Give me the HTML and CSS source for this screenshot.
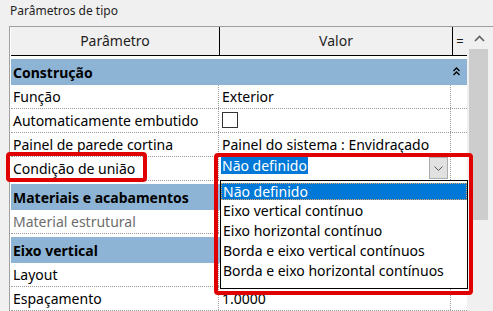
FILE: index.html
```html
<!DOCTYPE html>
<html lang="pt">
<head>
    <meta charset="UTF-8">
    <title>Parâmetros de tipo</title>
    <link rel="stylesheet" href="styles.css">
</head>
<body>
    <div class="title">Parâmetros de tipo</div>

    <div class="panel">
        <div class="grid">
            <div class="head">
                <div class="c1">Parâmetro</div>
                <div class="c2">Valor</div>
                <div class="c3">=</div>
            </div>

            <div class="group">
                <span>Construção</span>
                <svg class="collapse" width="7" height="9" viewBox="0 0 7 9">
                    <path d="M0.5 4 L3.5 1 L6.5 4 M0.5 8 L3.5 5 L6.5 8" fill="none" stroke="#000" stroke-width="1.4"/>
                </svg>
            </div>
            <div class="row">
                <div class="c1">Função</div>
                <div class="c2">Exterior</div>
                <div class="c3"></div>
            </div>
            <div class="row">
                <div class="c1">Automaticamente embutido</div>
                <div class="c2"><span class="check"></span></div>
                <div class="c3"></div>
            </div>
            <div class="row">
                <div class="c1">Painel de parede cortina</div>
                <div class="c2">Painel do sistema : Envidraçado</div>
                <div class="c3"></div>
            </div>
            <div class="row">
                <div class="c1">Condição de união</div>
                <div class="c2">
                    <div class="combo">
                        <span class="combo-text">Não definido</span>
                        <span class="combo-btn">
                            <svg width="9" height="5" viewBox="0 0 9 5">
                                <path d="M0.5 0.5 L4.5 4.5 L8.5 0.5" fill="none" stroke="#555" stroke-width="1"/>
                            </svg>
                        </span>
                    </div>
                </div>
                <div class="c3"></div>
            </div>

            <div class="group">
                <span>Materiais e acabamentos</span>
            </div>
            <div class="row">
                <div class="c1 muted">Material estrutural</div>
                <div class="c2"></div>
                <div class="c3"></div>
            </div>

            <div class="group">
                <span>Eixo vertical</span>
            </div>
            <div class="row">
                <div class="c1">Layout</div>
                <div class="c2"></div>
                <div class="c3"></div>
            </div>
            <div class="row">
                <div class="c1">Espaçamento</div>
                <div class="c2">1.0000</div>
                <div class="c3"></div>
            </div>
        </div>

        <div class="scroll">
            <div class="scroll-up">
                <svg width="11" height="7" viewBox="0 0 11 7">
                    <path d="M1 6 L5.5 1.5 L10 6" fill="none" stroke="#606060" stroke-width="1.6"/>
                </svg>
            </div>
            <div class="thumb"></div>
        </div>
    </div>

    <!-- lista aberta do combo -->
    <div class="dropdown">
        <div class="item selected">Não definido</div>
        <div class="item">Eixo vertical contínuo</div>
        <div class="item">Eixo horizontal contínuo</div>
        <div class="item">Borda e eixo vertical contínuos</div>
        <div class="item">Borda e eixo horizontal contínuos</div>
    </div>

    <!-- marcações vermelhas -->
    <div class="mark mark-label"></div>
    <div class="mark mark-list"></div>
</body>
</html>
```

FILE: styles.css
```css
body {
    margin: 0;
    height: 311px;
    overflow: hidden;
    position: relative;
    background-color: #f0f0f0;
    font-family: "Noto Sans", "Open Sans", sans-serif;
    font-size: 14px;
    color: #000;
}
.title {
    height: 26px;
    padding-left: 10px;
    font-size: 12px;
    line-height: 22px;
    color: #1e1e1e;
}
.panel {
    display: flex;
    margin-left: 9px;
    border-top: 1px solid #a0a0a0;
    border-left: 1px solid #a0a0a0;
}
.grid {
    width: 456px;
    padding-left: 1px;
    background: #fff;
}
.c1 {
    width: 208px;
    padding-left: 2px;
    box-sizing: border-box;
    white-space: nowrap;
    border-right: 1px dotted #9a9a9a;
}
.c2 {
    width: 232px;
    padding-left: 3px;
    box-sizing: border-box;
    white-space: nowrap;
    border-right: 1px dotted #9a9a9a;
}
.c3 {
    width: 14px;
}
.head {
    display: flex;
    height: 28px;
    line-height: 28px;
    background: #f0f0f0;
    border-bottom: 1px solid #000;
    color: #1e1e1e;
}
.head .c1,
.head .c2 {
    text-align: center;
    border-right: 1px solid #000;
    box-sizing: content-box;
    padding-left: 0;
}
.head .c3 {
    text-align: center;
    font-size: 13px;
}
.group {
    display: flex;
    justify-content: space-between;
    align-items: center;
    margin-top: 3px;
    height: 26px;
    padding: 0 7px 0 2px;
    background: #8db4d4;
    font-weight: bold;
}
.collapse {
    margin-top: -1px;
}
.row {
    display: flex;
    height: 23px;
    line-height: 23px;
    border-bottom: 1px dotted #9a9a9a;
}
.muted {
    color: #6d6d6d;
}
.check {
    display: inline-block;
    width: 14px;
    height: 14px;
    margin-top: 3px;
    vertical-align: top;
    background: #fff;
    border: 1px solid #333;
}
.combo {
    display: flex;
    justify-content: space-between;
    height: 22px;
    padding-right: 2px;
}
.c2 .combo {
    margin-left: -1px;
}
.combo-text {
    height: 17px;
    line-height: 17px;
    padding: 0 1px;
    background: #0078d7;
    color: #fff;
}
.combo-btn {
    display: flex;
    align-items: center;
    justify-content: center;
    width: 17px;
    height: 20px;
    background: #e1e1e1;
    border: 1px solid #adadad;
}
.scroll {
    display: flex;
    flex-direction: column;
    width: 21px;
    padding-left: 2px;
}
.scroll-up {
    height: 22px;
    display: flex;
    justify-content: center;
    align-items: center;
}
.thumb {
    width: 19px;
    height: 171px;
    background: #cdcdcd;
}
.dropdown {
    position: absolute;
    left: 220px;
    top: 180px;
    width: 246px;
    height: 107px;
    background: #fff;
    border: 1px solid #000;
}
.item {
    height: 20px;
    line-height: 20px;
    padding-left: 2px;
    white-space: nowrap;
}
.item.selected {
    background: #0078d7;
    color: #fff;
    outline: 1px dotted #e8a860;
    outline-offset: -1px;
    margin-top: 2px;
    height: 17px;
    line-height: 17px;
    margin-bottom: 1px;
}
.mark {
    position: absolute;
    border: 4px solid #e00000;
    border-radius: 4px;
}
.mark-label {
    left: 6px;
    top: 152px;
    width: 133px;
    height: 22px;
}
.mark-list {
    left: 214px;
    top: 153px;
    width: 251px;
    height: 134px;
}
```
